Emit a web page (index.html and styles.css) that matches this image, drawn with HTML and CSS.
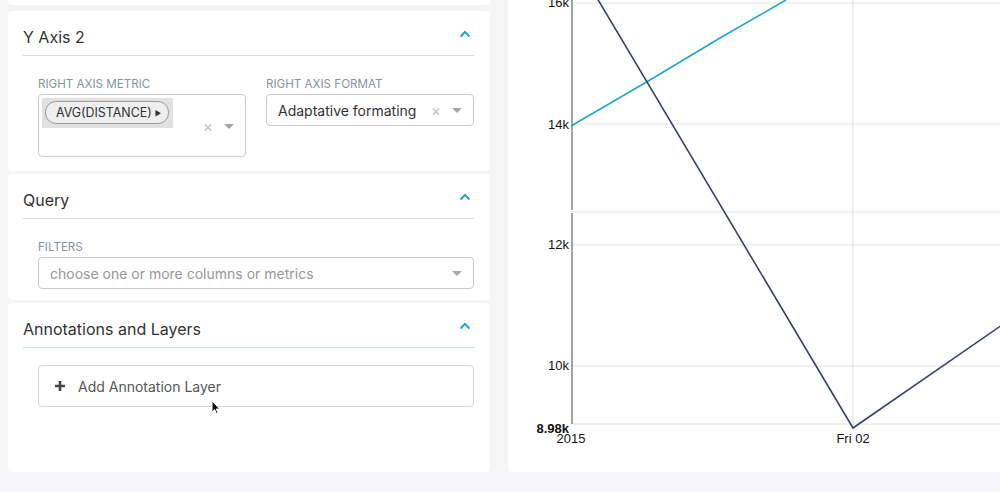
FILE: index.html
```html
<!DOCTYPE html>
<html lang="en">
<head>
  <meta charset="UTF-8">
  <title>Explore - Line Chart</title>
  <link rel="stylesheet" href="styles.css">
</head>
<body>
  <div class="explore">
    <div class="controls">
      <div class="card card-stub"></div>

      <div class="card">
        <div class="card-header">
          <span class="card-title">Y Axis 2</span>
          <svg class="chevron" width="12" height="8" viewBox="0 0 12 8"><path d="M1.5 6.5 L6 2 L10.5 6.5" /></svg>
        </div>
        <div class="card-body">
          <div class="row">
            <div class="field">
              <div class="field-label">Right Axis Metric</div>
              <div class="select select-multi">
                <div class="tag-box">
                  <span class="tag">AVG(DISTANCE)<span class="caret">&#9654;</span></span>
                </div>
                <div class="indicators">
                  <span class="clear">&times;</span>
                  <span class="arrow"></span>
                </div>
              </div>
            </div>
            <div class="field">
              <div class="field-label">Right Axis Format</div>
              <div class="select">
                <span class="select-value">Adaptative formating</span>
                <div class="indicators">
                  <span class="clear">&times;</span>
                  <span class="arrow"></span>
                </div>
              </div>
            </div>
          </div>
        </div>
      </div>

      <div class="card">
        <div class="card-header">
          <span class="card-title">Query</span>
          <svg class="chevron" width="12" height="8" viewBox="0 0 12 8"><path d="M1.5 6.5 L6 2 L10.5 6.5" /></svg>
        </div>
        <div class="card-body card-body-query">
          <div class="field">
            <div class="field-label">Filters</div>
            <div class="select">
              <span class="select-placeholder">choose one or more columns or metrics</span>
              <div class="indicators">
                <span class="arrow"></span>
              </div>
            </div>
          </div>
        </div>
      </div>

      <div class="card card-last">
        <div class="card-header card-header-active">
          <span class="card-title">Annotations and Layers</span>
          <svg class="chevron" width="12" height="8" viewBox="0 0 12 8"><path d="M1.5 6.5 L6 2 L10.5 6.5" /></svg>
        </div>
        <div class="card-body">
          <div class="add-layer">
            <svg class="plus" width="12" height="12" viewBox="0 0 12 12"><path d="M6 1 V11 M1 6 H11" /></svg>
            <span>Add Annotation Layer</span>
            <svg class="cursor" width="10" height="15" viewBox="0 0 10 15"><path d="M1 1 L1 12 L3.6 9.6 L5.4 13.6 L7 12.9 L5.3 9 L8.8 9 Z" /></svg>
          </div>
        </div>
      </div>
    </div>

    <div class="chart-panel">
      <svg class="chart" viewBox="508 0 492 472" width="492" height="472">
        <g class="grid">
          <line x1="571" y1="3" x2="1000" y2="3" />
          <line x1="571" y1="124" x2="1000" y2="124" />
          <line x1="571" y1="212" x2="1000" y2="212" />
          <line x1="571" y1="245" x2="1000" y2="245" />
          <line x1="571" y1="366" x2="1000" y2="366" />
          <line x1="571" y1="424" x2="1000" y2="424" />
          <line x1="853" y1="0" x2="853" y2="428" />
        </g>
        <line class="axis" x1="572" y1="0" x2="572" y2="210" />
        <line class="axis" x1="572" y1="213" x2="572" y2="424" />
        <g class="ticks">
          <text x="569" y="7" text-anchor="end">16k</text>
          <text x="569" y="129" text-anchor="end">14k</text>
          <text x="569" y="249" text-anchor="end">12k</text>
          <text x="569" y="370" text-anchor="end">10k</text>
          <text x="569" y="433" text-anchor="end" class="tick-bold">8.98k</text>
          <text x="571" y="443" text-anchor="middle">2015</text>
          <text x="853" y="443" text-anchor="middle">Fri 02</text>
        </g>
        <polyline class="series-teal" points="571,126 650,80 720,38 786,0" />
        <polyline class="series-navy" points="597,-2 853,428 1002,325" />
      </svg>
    </div>
  </div>
</body>
</html>
```

FILE: styles.css
```css
body {
  margin: 0;
  background: #f5f5f7;
  font-family: 'Inter', 'Noto Sans', sans-serif;
  color: #323232;
}

.explore {
  display: flex;
  gap: 18px;
  padding-left: 8px;
  height: 492px;
  overflow: hidden;
}

.controls {
  width: 482px;
  flex-shrink: 0;
  display: flex;
  flex-direction: column;
}

.card {
  background: #fff;
  border-radius: 4px;
  padding: 0 16px 0 15px;
  margin-bottom: 3px;
}

.card-stub {
  height: 5px;
  border-radius: 0 0 4px 4px;
  margin-bottom: 6px;
}

.card-header {
  display: flex;
  justify-content: space-between;
  align-items: center;
  padding: 14px 3px 6px 0;
  line-height: 24px;
  border-bottom: 1px solid #d9dcde;
}

.card-header-active {
  border-bottom-color: #c6dce3;
}

.card-title {
  font-size: 16px;
  color: #323232;
}

.chevron {
  margin-top: -6px;
}

.chevron path {
  fill: none;
  stroke: #20a7c9;
  stroke-width: 2;
}

.card-body {
  padding: 0 0 14px 15px;
}

.card-body-query {
  padding-bottom: 11px;
}

.card-last {
  flex: 1;
  margin-bottom: 20px;
}

.row {
  display: flex;
  gap: 20px;
}

.field {
  flex: 1;
}

.field-label {
  margin-top: 20px;
  margin-bottom: 2px;
  font-size: 11.6px;
  line-height: 16px;
  color: #879399;
  text-transform: uppercase;
}

.select {
  position: relative;
  display: flex;
  align-items: center;
  height: 32px;
  box-sizing: border-box;
  border: 1px solid #ccc;
  border-radius: 4px;
  padding: 0 0 0 11px;
  font-size: 14px;
}

.select-multi {
  height: 63px;
  align-items: flex-start;
  padding: 3px;
}

.select-value {
  flex: 1;
  color: #323232;
}

.select-placeholder {
  flex: 1;
  color: #979797;
}

.indicators {
  display: flex;
  align-items: center;
  gap: 11px;
  padding-right: 11px;
  height: 30px;
}

.select-multi .indicators {
  position: absolute;
  right: 0;
  top: 16px;
}

.clear {
  color: #c2c2c2;
  font-size: 15px;
  line-height: 1;
}

.arrow {
  width: 0;
  height: 0;
  border-left: 5px solid transparent;
  border-right: 5px solid transparent;
  border-top: 5px solid #a7a7a7;
}

.tag-box {
  background: #e1e1e1;
  padding: 3px 4px 4px 3px;
}

.tag {
  display: inline-block;
  border: 1px solid #9a9a9a;
  border-radius: 11px;
  background: #efefef;
  padding: 0 7px 0 10px;
  height: 21px;
  line-height: 21px;
  font-size: 12.4px;
  color: #323232;
}

.caret {
  font-size: 7px;
  vertical-align: 1px;
  margin-left: 3px;
}

.add-layer {
  position: relative;
  margin-top: 17px;
  height: 42px;
  box-sizing: border-box;
  border: 1px solid #d3d7d9;
  border-radius: 4px;
  display: flex;
  align-items: center;
  gap: 12px;
  padding-left: 15px;
  font-size: 14px;
  color: #555;
}

.plus path {
  stroke: #444;
  stroke-width: 2.6;
}

.cursor {
  position: absolute;
  left: 172px;
  top: 34px;
}

.cursor path {
  fill: #111;
  stroke: #fff;
  stroke-width: 1;
}

.chart-panel {
  flex: 1;
  height: 472px;
  background: #fff;
  border-radius: 0 0 0 4px;
  overflow: hidden;
}

.chart {
  display: block;
  font-family: 'Liberation Sans', Arial, sans-serif;
  font-size: 13px;
}

.grid line {
  stroke: #e3e3e6;
  stroke-width: 1.2;
}

.axis {
  stroke: #666;
  stroke-width: 1.2;
}

.ticks text {
  fill: #111;
}

.tick-bold {
  font-weight: bold;
}

.series-teal {
  fill: none;
  stroke: #1fa8c9;
  stroke-width: 1.6;
}

.series-navy {
  fill: none;
  stroke: #3a4262;
  stroke-width: 1.6;
}
```
